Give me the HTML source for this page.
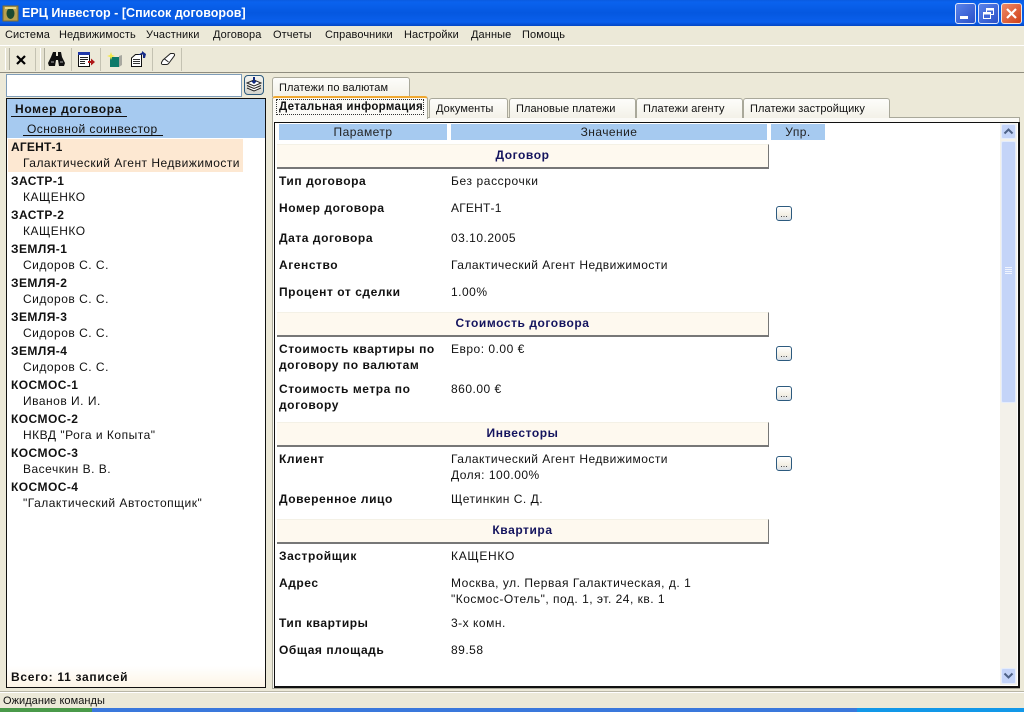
<!DOCTYPE html>
<html><head><meta charset="utf-8">
<style>
html,body{margin:0;padding:0;width:1024px;height:712px;overflow:hidden;background:#ece9d8}
body{position:relative;font:12px/14px "Liberation Sans","DejaVu Sans",sans-serif;color:#111}
.a{position:absolute}
.t{position:absolute;white-space:nowrap;letter-spacing:.5px;height:14px;line-height:14px}
.b{font-weight:bold;letter-spacing:.56px}
.l{letter-spacing:.45px}
.m{font-size:11px;letter-spacing:.1px;top:28px}
.sec{position:absolute;left:277px;width:491px;height:22px;background:#fef9ef;border-right:1px solid #777;border-bottom:2px solid #777;border-top:1px solid #f4f1e6;text-align:center;font-weight:bold;color:#14145e;letter-spacing:.56px;line-height:20px}
.btn{position:absolute;left:776px;width:14px;height:13px;border:1px solid #2c5a7e;border-radius:3px;background:linear-gradient(#fff,#f4efe4 60%,#d8dfe8);font-size:9px;line-height:14px;text-align:center;color:#333;letter-spacing:0}
.tab{position:absolute;top:98px;height:19px;background:linear-gradient(#fdfdfb,#f3f1e8);border:1px solid #a9a89a;border-bottom:none;border-radius:3px 3px 0 0;line-height:20px;font-size:11px;white-space:nowrap;padding-left:6px;box-sizing:content-box;letter-spacing:.08px}
.h{position:absolute;top:124px;height:16px;background:#a6caf0;text-align:center;line-height:17px;letter-spacing:.45px;color:#222}
</style></head><body>

<!-- title bar -->
<div class="a" style="left:0;top:0;width:1024px;height:26px;background:linear-gradient(#0a5be0 0,#0a62ee 8%,#0558e0 50%,#0a5fec 85%,#0347c4 100%)"></div>
<svg class="a" style="left:2px;top:5px" width="17" height="17" viewBox="0 0 17 17"><rect x="1" y="1" width="15" height="15" fill="#b8a050" stroke="#7a6a30"/><ellipse cx="8.5" cy="8.5" rx="4" ry="5.5" fill="#1c4a30"/><rect x="3" y="2" width="11" height="2" fill="#e8d888"/></svg>
<div class="t" style="left:22px;top:6px;color:#fff;font-weight:bold;font-size:12.5px;letter-spacing:.03px">ЕРЦ Инвестор - [Список договоров]</div>
<!-- window buttons -->
<div class="a" style="left:955px;top:3px;width:19px;height:19px;border:1px solid #dfe7fb;border-radius:3px;background:linear-gradient(135deg,#5a83ea,#2a50c8)"><div class="a" style="left:4px;top:12px;width:8px;height:3px;background:#fff"></div></div>
<div class="a" style="left:978px;top:3px;width:19px;height:19px;border:1px solid #dfe7fb;border-radius:3px;background:linear-gradient(135deg,#5a83ea,#2a50c8)">
<svg class="a" style="left:3px;top:3px" width="13" height="13" viewBox="0 0 13 13" fill="none" stroke="#fff"><rect x="4.5" y="1.5" width="7" height="6"/><path d="M4.5 2.5h7" stroke-width="2"/><rect x="1.5" y="5.5" width="7" height="6" fill="#3f66d8"/><path d="M1.5 6.5h7" stroke-width="2"/></svg></div>
<div class="a" style="left:1001px;top:3px;width:19px;height:19px;border:1px solid #f0e6e0;border-radius:3px;background:linear-gradient(135deg,#ee8a68,#d04018)">
<svg class="a" style="left:3px;top:3px" width="13" height="13" viewBox="0 0 13 13"><path d="M2 2L11 11M11 2L2 11" stroke="#fff" stroke-width="2.2"/></svg></div>

<!-- menu -->
<div class="t m" style="left:5px">Система</div>
<div class="t m" style="left:59px">Недвижимость</div>
<div class="t m" style="left:146px">Участники</div>
<div class="t m" style="left:213px">Договора</div>
<div class="t m" style="left:273px">Отчеты</div>
<div class="t m" style="left:325px">Справочники</div>
<div class="t m" style="left:404px">Настройки</div>
<div class="t m" style="left:471px">Данные</div>
<div class="t m" style="left:522px">Помощь</div>
<div class="a" style="left:0;top:45px;width:1024px;height:1px;background:#fff"></div>
<div class="a" style="left:0;top:72px;width:1024px;height:1px;background:#8f8d80"></div>

<!-- toolbar -->
<div class="a" style="left:5px;top:48px;width:3px;height:22px;background:#e4e1d0;border-left:1px solid #fff;border-right:1px solid #b0ae9e"></div>
<div class="a" style="left:40px;top:48px;width:3px;height:22px;background:#e4e1d0;border-left:1px solid #fff;border-right:1px solid #b0ae9e"></div>
<div class="a" style="left:35px;top:48px;width:1px;height:23px;background:#c4c2b2"></div>
<div class="a" style="left:71px;top:48px;width:1px;height:23px;background:#c4c2b2"></div>
<div class="a" style="left:100px;top:48px;width:1px;height:23px;background:#c4c2b2"></div>
<div class="a" style="left:152px;top:48px;width:1px;height:23px;background:#c4c2b2"></div>
<div class="a" style="left:181px;top:48px;width:1px;height:23px;background:#c4c2b2"></div>
<svg class="a" style="left:15px;top:54px" width="12" height="12" viewBox="0 0 12 12"><path d="M2 2L10 10M10 2L2 10" stroke="#000" stroke-width="2.2"/></svg>
<svg class="a" style="left:48px;top:51px" width="18" height="16" viewBox="0 0 18 16"><path d="M5 1h3v4h2V1h3l1 5 3 6-1 3H11L10 9H8L7 15H1L0 12l3-6z" fill="#111"/><path d="M3 11h3M12 11h3" stroke="#aaa"/></svg>
<svg class="a" style="left:77px;top:51px" width="19" height="17" viewBox="0 0 19 17"><rect x="1.500" y="1.500" width="11" height="14" fill="#fff" stroke="#111"/><rect x="1" y="1" width="12" height="3" fill="#2038a8"/><path d="M3 6.500h8M3 8.500h8M3 10.500h5M3 12.500h5" stroke="#222"/><path d="M11 10h3V7.500l4 3.500-4 3.500V12h-3z" fill="#b01818"/></svg>
<svg class="a" style="left:107px;top:51px" width="16" height="17" viewBox="0 0 16 17"><path d="M3 6h9v10H3z" fill="#0e7a6a"/><path d="M12 5l3-1v10l-3 2z" fill="#a8a8a0"/><path d="M4 1l1 3 3 1-3 1-1 3-1-3-3-1 3-1z" fill="#f4e84a"/></svg>
<svg class="a" style="left:130px;top:50px" width="17" height="18" viewBox="0 0 17 18"><path d="M1.500 8l4-3.500h6v12h-10z" fill="#fff" stroke="#111"/><path d="M3 9.500h7M3 11.500h7M3 13.500h7" stroke="#333"/><path d="M8 5l4-2.500V1l4 3-1 4h-2V4.500z" fill="#182c88"/></svg>
<svg class="a" style="left:160px;top:52px" width="16" height="14" viewBox="0 0 16 14"><path d="M10.500 1.500h2.500q2 0 1.500 2L9 11q-1 1.500-2.500 1.500H3q-2 0-1.500-2L3 8z" fill="#fff" stroke="#222"/><path d="M4.500 7l4 3" stroke="#222" fill="none"/></svg>

<!-- search + button -->
<div class="a" style="left:6px;top:74px;width:234px;height:21px;background:#fff;border:1px solid #7f9db9"></div>
<div class="a" style="left:244px;top:75px;width:18px;height:18px;border:1px solid #2c5a7e;border-radius:4px;background:linear-gradient(#f4f4f0,#d4d4cc)"></div>
<svg class="a" style="left:245px;top:76px" width="18" height="17" viewBox="0 0 18 17"><path d="M2 7l7-3 7 3-7 3zM2 9.500l7 3 7-3M2 12l7 3 7-3" fill="#fff" stroke="#222"/><path d="M8 1h2v4h2L9 8 6 5h2z" fill="#102a80"/></svg>

<!-- left list -->
<div class="a" style="left:6px;top:98px;width:258px;height:588px;background:#fff;border:1px solid #111"></div>
<div class="a" style="left:7px;top:99px;width:258px;height:39px;background:#a6caf0"></div>
<div class="a" style="left:11px;top:116px;width:116px;height:1px;background:#111"></div>
<div class="t b" style="left:15px;top:102px;letter-spacing:.67px">Номер договора</div>
<div class="a" style="left:23px;top:135px;width:140px;height:1px;background:#111"></div>
<div class="t" style="left:27px;top:122px;letter-spacing:.45px">Основной соинвестор</div>
<div class="a" style="left:8px;top:139px;width:235px;height:33px;background:#fde8d2"></div>
<div class="a" style="left:7px;top:666px;width:258px;height:21px;background:linear-gradient(#fff,#fdf5e6)"></div>

<div class="t b" style="left:11px;top:140px;letter-spacing:.2px">АГЕНТ-1</div><div class="t" style="left:23px;top:156px;letter-spacing:.47px">Галактический Агент Недвижимости</div>
<div class="t b l" style="left:11px;top:174px">ЗАСТР-1</div><div class="t" style="left:23px;top:190px">КАЩЕНКО</div>
<div class="t b l" style="left:11px;top:208px">ЗАСТР-2</div><div class="t" style="left:23px;top:224px">КАЩЕНКО</div>
<div class="t b l" style="left:11px;top:242px">ЗЕМЛЯ-1</div><div class="t" style="left:23px;top:258px">Сидоров С. С.</div>
<div class="t b l" style="left:11px;top:276px">ЗЕМЛЯ-2</div><div class="t" style="left:23px;top:292px">Сидоров С. С.</div>
<div class="t b l" style="left:11px;top:310px">ЗЕМЛЯ-3</div><div class="t" style="left:23px;top:326px">Сидоров С. С.</div>
<div class="t b l" style="left:11px;top:344px">ЗЕМЛЯ-4</div><div class="t" style="left:23px;top:360px">Сидоров С. С.</div>
<div class="t b l" style="left:11px;top:378px">КОСМОС-1</div><div class="t" style="left:23px;top:394px">Иванов И. И.</div>
<div class="t b l" style="left:11px;top:412px">КОСМОС-2</div><div class="t" style="left:23px;top:428px">НКВД "Рога и Копыта"</div>
<div class="t b l" style="left:11px;top:446px">КОСМОС-3</div><div class="t" style="left:23px;top:462px">Васечкин В. В.</div>
<div class="t b l" style="left:11px;top:480px">КОСМОС-4</div><div class="t" style="left:23px;top:496px">"Галактический Автостопщик"</div>
<div class="t b" style="left:11px;top:670px;letter-spacing:.7px">Всего: 11 записей</div>

<!-- tabs -->
<div class="tab" style="left:272px;top:77px;width:130px">Платежи по валютам</div>
<div class="a" style="left:272px;top:117px;width:748px;height:572px;background:#fbfaf6;border:1px solid #a9a89a;box-sizing:border-box"></div>
<div class="tab" style="left:429px;width:71px">Документы</div>
<div class="tab" style="left:509px;width:119px">Плановые платежи</div>
<div class="tab" style="left:636px;width:99px">Платежи агенту</div>
<div class="tab" style="left:743px;width:139px">Платежи застройщику</div>
<div class="a" style="left:272px;top:96px;width:156px;height:23px;background:#fbfaf6;border:1px solid #a9a89a;border-top:2px solid #f0a830;border-bottom:none;border-radius:3px 3px 0 0;box-sizing:border-box"></div>
<div class="a" style="left:276px;top:99px;width:148px;height:16px;border:1px dotted #333;box-sizing:border-box"></div>
<div class="t b" style="left:279px;top:100px;font-size:11.5px;letter-spacing:.32px">Детальная информация</div>

<!-- content panel -->
<div class="a" style="left:274px;top:122px;width:743px;height:563px;background:#fff;border:1px solid #111;border-right-width:2px;border-bottom-width:2px;box-sizing:content-box"></div>
<div class="h" style="left:279px;width:168px">Параметр</div>
<div class="h" style="left:451px;width:316px">Значение</div>
<div class="h" style="left:771px;width:54px">Упр.</div>

<div class="sec" style="top:144px">Договор</div>
<div class="sec" style="top:312px">Стоимость договора</div>
<div class="sec" style="top:422px">Инвесторы</div>
<div class="sec" style="top:519px">Квартира</div>

<div class="t b" style="left:279px;top:174px">Тип договора</div><div class="t" style="left:451px;top:174px;letter-spacing:.6px">Без рассрочки</div>
<div class="t b" style="left:279px;top:201px">Номер договора</div><div class="t" style="left:451px;top:201px;letter-spacing:.2px">АГЕНТ-1</div>
<div class="t b" style="left:279px;top:231px">Дата договора</div><div class="t" style="left:451px;top:231px">03.10.2005</div>
<div class="t b" style="left:279px;top:258px">Агенство</div><div class="t" style="left:451px;top:258px;letter-spacing:.47px">Галактический Агент Недвижимости</div>
<div class="t b" style="left:279px;top:285px">Процент от сделки</div><div class="t" style="left:451px;top:285px">1.00%</div>
<div class="t b" style="left:279px;top:342px">Стоимость квартиры по</div><div class="t" style="left:451px;top:342px">Евро: 0.00 €</div>
<div class="t b" style="left:279px;top:358px">договору по валютам</div>
<div class="t b" style="left:279px;top:382px">Стоимость метра по</div><div class="t" style="left:451px;top:382px">860.00 €</div>
<div class="t b" style="left:279px;top:398px">договору</div>
<div class="t b" style="left:279px;top:452px">Клиент</div><div class="t" style="left:451px;top:452px;letter-spacing:.47px">Галактический Агент Недвижимости</div>
<div class="t" style="left:451px;top:468px">Доля: 100.00%</div>
<div class="t b" style="left:279px;top:492px">Доверенное лицо</div><div class="t" style="left:451px;top:492px">Щетинкин С. Д.</div>
<div class="t b" style="left:279px;top:549px">Застройщик</div><div class="t" style="left:451px;top:549px;letter-spacing:.7px">КАЩЕНКО</div>
<div class="t b" style="left:279px;top:576px">Адрес</div><div class="t" style="left:451px;top:576px;letter-spacing:.53px">Москва, ул. Первая Галактическая, д. 1</div>
<div class="t" style="left:451px;top:592px">"Космос-Отель", под. 1, эт. 24, кв. 1</div>
<div class="t b" style="left:279px;top:616px">Тип квартиры</div><div class="t" style="left:451px;top:616px">3-х комн.</div>
<div class="t b" style="left:279px;top:643px">Общая площадь</div><div class="t" style="left:451px;top:643px">89.58</div>

<div class="btn" style="top:206px">...</div>
<div class="btn" style="top:346px">...</div>
<div class="btn" style="top:386px">...</div>
<div class="btn" style="top:456px">...</div>

<!-- scrollbar -->
<div class="a" style="left:1000px;top:123px;width:17px;height:562px;background:#f3f1ea"></div>
<div class="a" style="left:1001px;top:124px;width:15px;height:15px;background:#c4d4f8;border:1px solid #e4ecfc;box-sizing:border-box;border-radius:2px"></div>
<svg class="a" style="left:1003px;top:127px" width="11" height="9" viewBox="0 0 11 9"><path d="M1.500 6.500L5.500 2.500L9.500 6.500" fill="none" stroke="#4d6185" stroke-width="2"/></svg>
<div class="a" style="left:1001px;top:141px;width:15px;height:262px;background:#c4d4f8;border:1px solid #e4ecfc;box-sizing:border-box;border-radius:2px"></div>
<svg class="a" style="left:1004px;top:267px" width="9" height="8" viewBox="0 0 9 8"><path d="M1 .5h7M1 2.500h7M1 4.500h7M1 6.500h7" stroke="#f0f4fe"/></svg>
<div class="a" style="left:1001px;top:668px;width:15px;height:16px;background:#c4d4f8;border:1px solid #e4ecfc;box-sizing:border-box;border-radius:2px"></div>
<svg class="a" style="left:1003px;top:671px" width="11" height="9" viewBox="0 0 11 9"><path d="M1.500 2.500L5.500 6.500L9.500 2.500" fill="none" stroke="#4d6185" stroke-width="2"/></svg>

<!-- status -->
<div class="a" style="left:0;top:691px;width:1024px;height:1px;background:#b8b6a6"></div>
<div class="a" style="left:0;top:692px;width:1024px;height:1px;background:#fff"></div>
<div class="t" style="left:3px;top:694px;font-size:11px;letter-spacing:.05px">Ожидание команды</div>
<div class="a" style="left:0;top:708px;width:1024px;height:4px;background:#3a78dc"></div>
<div class="a" style="left:0;top:708px;width:92px;height:4px;background:#4a9a4a"></div>
<div class="a" style="left:857px;top:708px;width:167px;height:4px;background:#1298e8"></div>
</body></html>
